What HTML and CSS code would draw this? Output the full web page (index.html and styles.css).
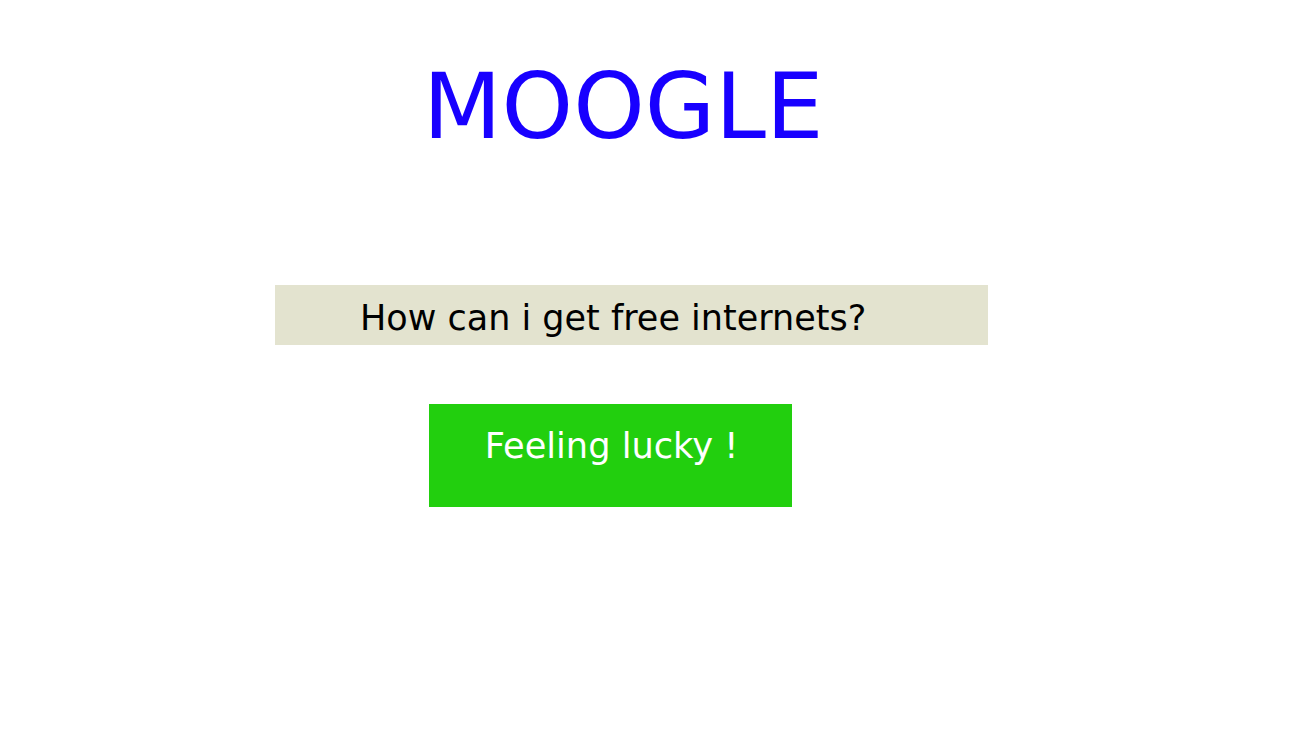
FILE: index.html
```html
<!DOCTYPE html>
<html>
<head>
<meta charset="utf-8">
<title>Moogle</title>
<link rel="stylesheet" href="styles.css">
</head>
<body>
<main class="page">
  <h1 class="logo">MOOGLE</h1>
  <div class="search">How can i get free internets?</div>
  <button class="lucky">Feeling lucky !</button>
</main>
</body>
</html>
```
FILE: styles.css
```css
html, body {
  margin: 0;
  padding: 0;
  background: #ffffff;
}
.page {
  display: flex;
  flex-direction: column;
  align-items: flex-start;
  font-family: "DejaVu Sans", sans-serif;
}
.logo {
  margin: 54px 0 0 423px;
  font-size: 91px;
  font-weight: normal;
  line-height: 106px;
  color: #1800ff;
}
.search {
  box-sizing: border-box;
  margin: 125px 0 0 275px;
  width: 713px;
  height: 60px;
  padding: 13px 0 0 85px;
  background: #e3e3cf;
  color: #000000;
  font-size: 35px;
  line-height: normal;
}
.lucky {
  box-sizing: border-box;
  margin: 59px 0 0 429px;
  width: 363px;
  height: 103px;
  padding: 21px 0 0 2px;
  border: none;
  background: #22cf0e;
  color: #ffffff;
  font-family: "DejaVu Sans", sans-serif;
  font-size: 35.2px;
  line-height: normal;
  text-align: center;
  display: flex;
  justify-content: center;
  align-items: flex-start;
}
```
